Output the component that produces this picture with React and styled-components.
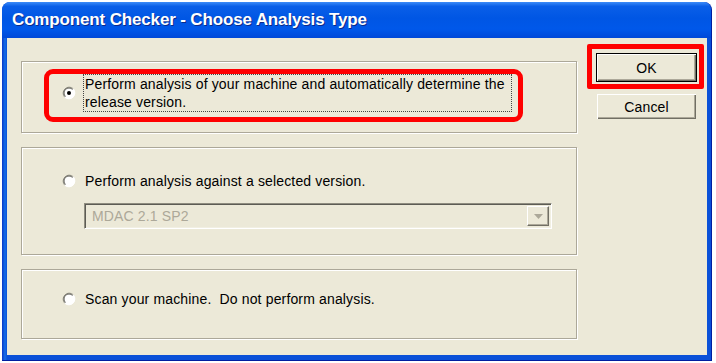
import React from 'react'
import styled, { createGlobalStyle } from 'styled-components'

const GlobalStyle = createGlobalStyle`
    html, body {
        margin:0;
        padding:0;
        background:#fff;
    }
    body {
        font-family:'Liberation Sans', Arial, sans-serif;
    }
`;

const Window = styled.div`
    margin:2px 0 0 2px;
    width:710px;
    height:359px;
    box-sizing:border-box;
    display:flex;
    flex-direction:column;
    background:#0842d5;
    border-radius:8px 8px 0 0;
    overflow:hidden;
    border-right:1px solid #001ea0;
    border-bottom:1px solid #001ea0;
`;
const TitleBar = styled.div`
    height:36px;
    flex:0 0 36px;
    display:flex;
    align-items:center;
    padding-left:10px;
    background:linear-gradient(180deg,#3c8cf8 0%,#0a5fe8 12%,#0056e4 45%,#0058ea 75%,#0048d8 100%);
    color:#fff;
    font-family:'Liberation Sans', Arial, sans-serif;
    font-weight:bold;
    font-size:17px;
    letter-spacing:-0.15px;
    text-shadow:1px 1px 0 #0a2a8a;
`;
const Frame = styled.div`
    flex:1;
    display:flex;
    padding:0 4px 5px 5px;
    background:linear-gradient(90deg,#0838c8 0px,#166ee8 3px,#0a50d8 5px);
`;
const Client = styled.div`
    flex:1;
    display:flex;
    gap:19px;
    padding:15px 10px 0 14px;
    background:#ece9d8;
    font-size:14px;
    letter-spacing:0.15px;
    color:#000;
`;
const Options = styled.div`
    width:556px;
    margin-top:8px;
    display:flex;
    flex-direction:column;
    gap:14px;
`;
const Group = styled.div`
    position:relative;
    height:${p => p.$h}px;
    box-sizing:border-box;
    padding:${p => p.$pad};
    border:1px solid #aca899;
    box-shadow: inset 1px 1px 0 #fff, 1px 1px 0 #fff;
    display:flex;
    flex-direction:column;
`;
const Row = styled.div`
    display:flex;
    align-items:center;
    gap:7px;
`;
const Label = styled.div`
    border:1px dotted ${p => p.$focus ? '#444' : 'transparent'};
    padding:0 ${p => p.$focus ? 6 : 1}px 0 1px;
    line-height:18px;
    white-space:pre;
`;
const Highlight = styled.div`
    position:absolute;
    left:22px;
    top:7px;
    width:479px;
    height:53px;
    box-sizing:border-box;
    border:5px solid #ff0000;
    border-radius:9px;
    pointer-events:none;
`;
const Combo = styled.div`
    margin:12px 0 0 22px;
    width:468px;
    height:26px;
    box-sizing:border-box;
    display:flex;
    align-items:center;
    border:1px solid;
    border-color:#8f8d80 #fff #fff #8f8d80;
    box-shadow:inset 1px 1px 0 #5d5c55, inset -1px -1px 0 #f1efe2;
    padding:2px;
`;
const ComboText = styled.div`
    flex:1;
    padding-left:5px;
    color:#aca899;
    font-size:14px;
`;
const ComboButton = styled.div`
    width:22px;
    height:20px;
    box-sizing:border-box;
    display:flex;
    align-items:center;
    justify-content:center;
    background:#ece9d8;
    border:1px solid;
    border-color:#fff #716f64 #716f64 #fff;
    box-shadow:inset -1px -1px 0 #aca899;
`;
const Buttons = styled.div`
    width:101px;
    display:flex;
    flex-direction:column;
    gap:11px;
`;
const OkWrap = styled.div`
    position:relative;
    &::after{
        content:"";
        position:absolute;
        top:-9px;
        left:-9px;
        right:-7px;
        bottom:-7px;
        border:5px solid #ff0000;
        border-radius:2px;
    }
`;
const Button = styled.div`
    height:${p => p.$default ? 29 : 27}px;
    box-sizing:border-box;
    display:flex;
    align-items:center;
    justify-content:center;
    background:#ece9d8;
    font-size:14px;
    border:1px solid ${p => p.$default ? '#000' : 'transparent'};
    box-shadow:inset 1px 1px 0 #fff, inset -1px -1px 0 #716f64, inset -2px -2px 0 #aca899;
`;

const Radio = ({checked}) => (
    <svg width="14" height="14" viewBox="0 0 14 14">
        <circle cx="7" cy="7" r="6" fill="#fff" />
        <path d="M2.76 11.24 A6 6 0 0 1 11.24 2.76" fill="none" stroke="#8f8d80" strokeWidth="1" />
        <path d="M3.46 10.54 A5 5 0 0 1 10.54 3.46" fill="none" stroke="#5d5c55" strokeWidth="1" />
        <path d="M11.24 2.76 A6 6 0 0 1 2.76 11.24" fill="none" stroke="#fff" strokeWidth="1" />
        {checked && <circle cx="7" cy="7" r="2" fill="#000" />}
    </svg>
);

const Arrow = () => (
    <svg width="9" height="5" viewBox="0 0 9 5">
        <path d="M0 0 H9 L4.5 5 Z" fill="#aca899" />
    </svg>
);

export default function App(){
    return(
        <>
            <GlobalStyle />
            <Window>
                <TitleBar>Component Checker - Choose Analysis Type</TitleBar>
                <Frame>
                    <Client>
                        <Options>
                            <Group $h={72} $pad="12px 0 0 40px">
                                <Row>
                                    <Radio checked />
                                    <Label $focus>{'Perform analysis of your machine and automatically determine the\nrelease version.'}</Label>
                                </Row>
                                <Highlight />
                            </Group>
                            <Group $h={108} $pad="23px 0 0 40px">
                                <Row>
                                    <Radio />
                                    <Label>Perform analysis against a selected version.</Label>
                                </Row>
                                <Combo>
                                    <ComboText>MDAC 2.1 SP2</ComboText>
                                    <ComboButton><Arrow /></ComboButton>
                                </Combo>
                            </Group>
                            <Group $h={70} $pad="19px 0 0 40px">
                                <Row>
                                    <Radio />
                                    <Label>Scan your machine.  Do not perform analysis.</Label>
                                </Row>
                            </Group>
                        </Options>
                        <Buttons>
                            <OkWrap>
                                <Button $default>OK</Button>
                            </OkWrap>
                            <Button>Cancel</Button>
                        </Buttons>
                    </Client>
                </Frame>
            </Window>
        </>
    )
}
